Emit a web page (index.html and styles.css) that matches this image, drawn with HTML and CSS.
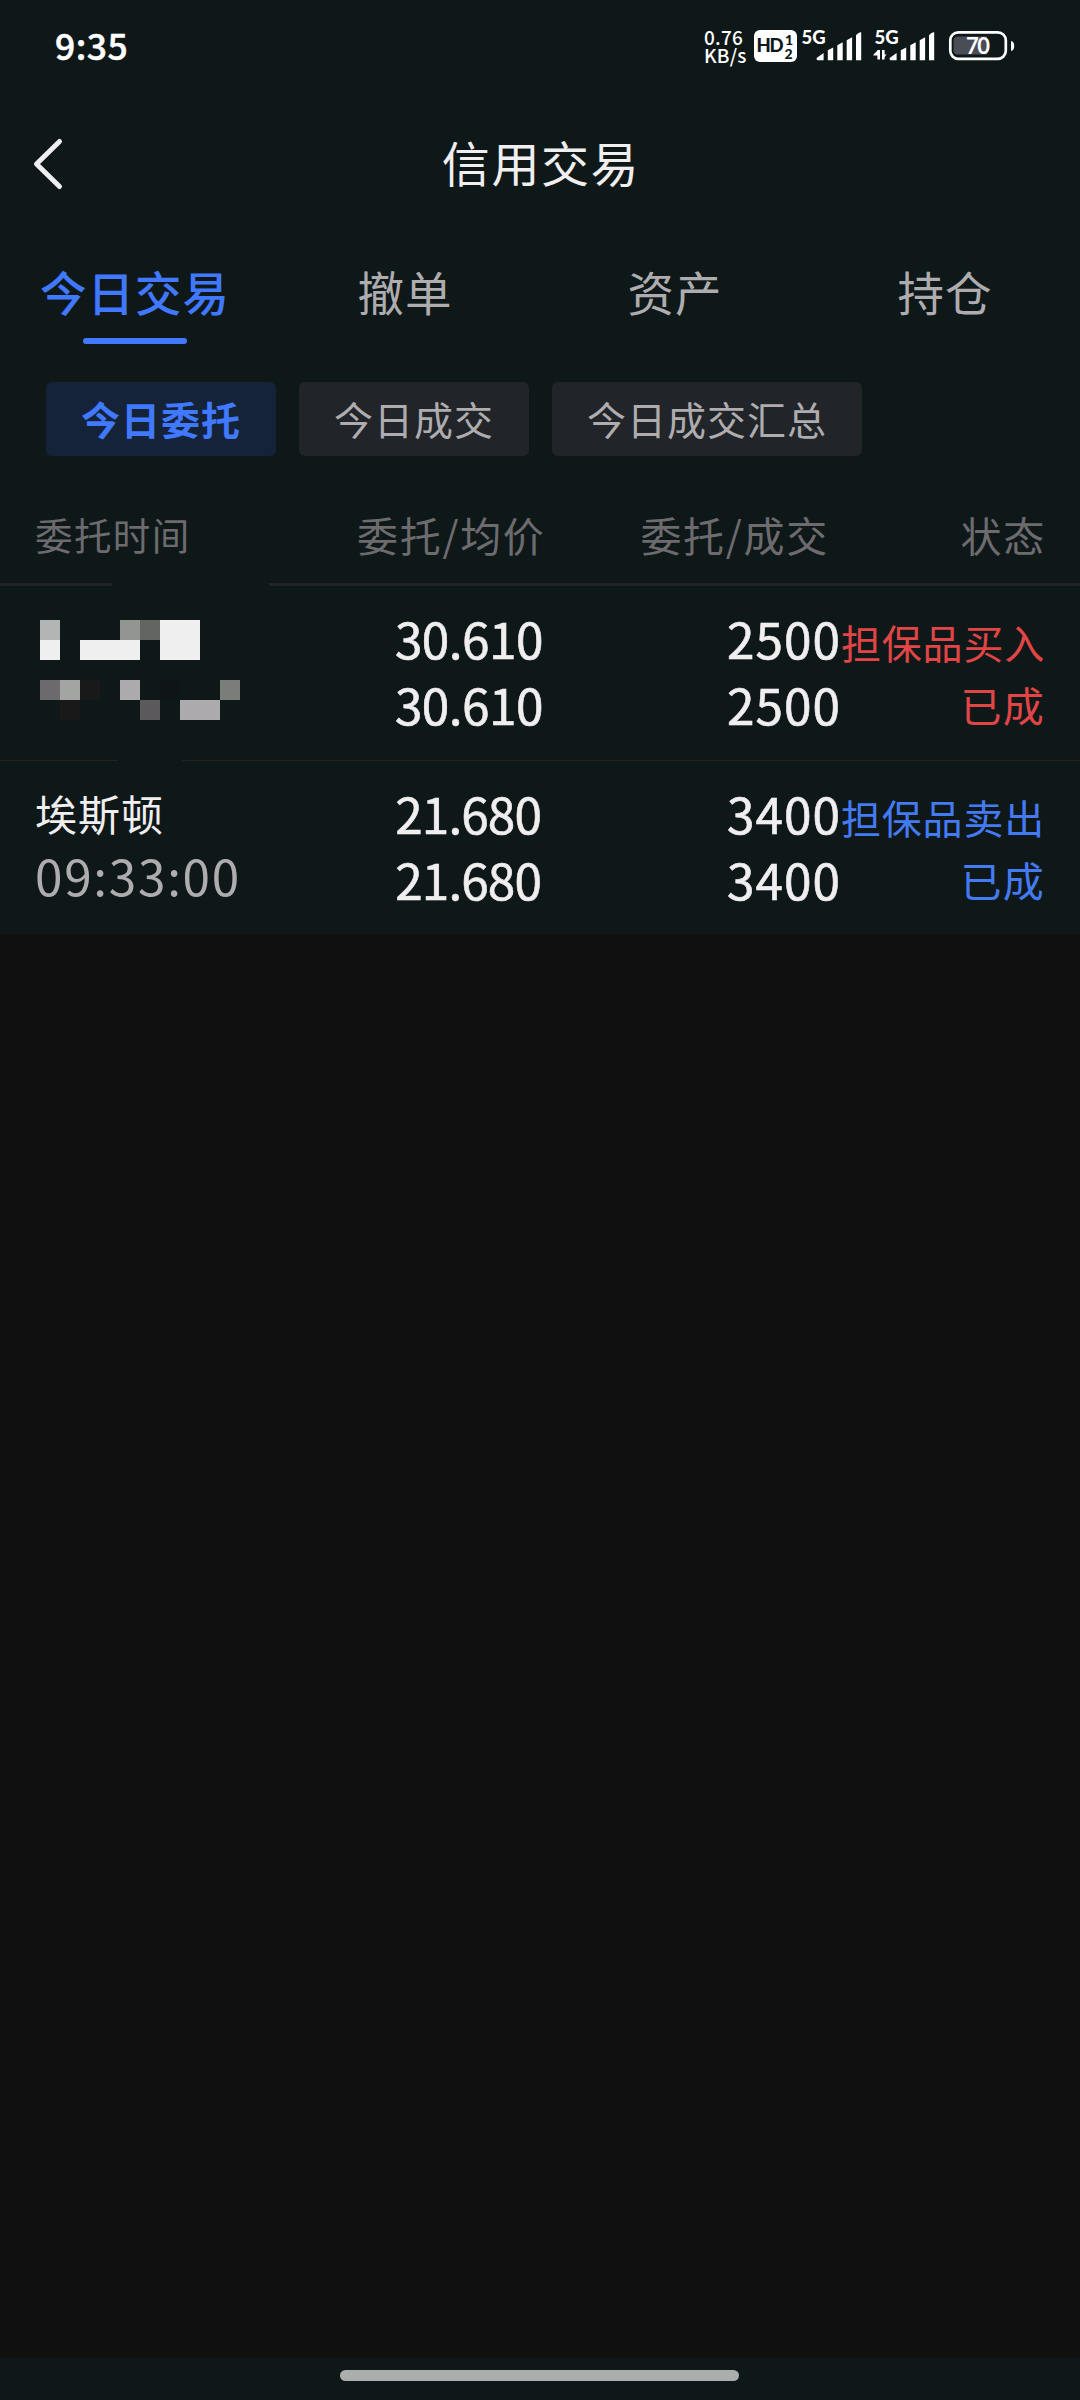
FILE: index.html
```html
<!DOCTYPE html>
<html lang="zh-CN">
<head>
<meta charset="utf-8">
<title>信用交易</title>
<link rel="stylesheet" href="styles.css">
</head>
<body>
<div class="statusbar">
  <span class="clock">9:35</span>
  <div class="indicators">
    <div class="speed"><span>0.76</span><span>KB/s</span></div>
    <svg class="status-icons" width="262" height="36" viewBox="753 28 262 36">
      <rect x="754" y="30" width="43" height="32" rx="6" fill="#fff"/>
      <g class="badge-text">
        <text x="756.5" y="52.4" font-size="18.5" textLength="27">HD</text>
        <text x="785" y="45" font-size="14">1</text>
        <text x="784.5" y="58.5" font-size="14">2</text>
      </g>
      <g class="net-text">
        <text x="801.5" y="44">5G</text>
        <text x="874.5" y="44">5G</text>
      </g>
      <g id="bars" fill="#fff">
        <path d="M823.6 53v7.3h-5.600q-1.400 0-1.400-1.600v-.7zM827.800 50.300l5.400-2.800v12.800h-5.400zM837.300 45.200l5.400-3v18.100h-5.400zM846.700 40.200l5.400-3v23.100h-5.400zM856 35.200q2-2.400 4.400-3h.8v28.100H856z"/>
      </g>
      <use href="#bars" x="73"/>
      <path d="M873.500 54.500l4.500-4.500v5.500h-4.500zM886.500 54.500l-4 5v-5z" fill="#fff"/>
      <path d="M878.700 50v9.500M883.300 50v9.500" stroke="#fff" stroke-width="2.600"/>
      <rect x="950.300" y="32.300" width="55.500" height="26.500" rx="8" fill="none" stroke="#fff" stroke-width="2.700"/>
      <path d="M987 36.500v18h-29q-4.500 0-4.500-4.500v-9q0-4.500 4.500-4.500z" fill="#4b4d56"/>
      <text class="battery-text" x="966" y="53.700" textLength="24">70</text>
      <path d="M1011 41q3.200.6 3.200 5t-3.200 5z" fill="#fff"/>
    </svg>
  </div>
</div>

<header class="titlebar">
  <svg class="back" width="36" height="56" viewBox="0 0 36 56"><path d="M28.500 5.500L5.500 28l23 22.500" fill="none" stroke="#f0eeef" stroke-width="5" stroke-linecap="round" stroke-linejoin="round"/></svg>
  <h1>信用交易</h1>
</header>

<nav class="tabs">
  <a class="tab active">今日交易</a>
  <a class="tab">撤单</a>
  <a class="tab">资产</a>
  <a class="tab">持仓</a>
</nav>

<div class="chips">
  <span class="chip active">今日委托</span>
  <span class="chip">今日成交</span>
  <span class="chip">今日成交汇总</span>
</div>

<div class="thead">
  <span class="small">委托时间</span>
  <span class="price">委托/均价</span>
  <span class="amount">委托/成交</span>
  <span class="state">状态</span>
</div>
<div class="rule"><i class="rule-left"></i><i class="rule-right"></i></div>

<main class="orders">
  <section class="order buy">
    <div class="who">
      <svg class="mosaic" width="200" height="100" viewBox="0 0 200 100" shape-rendering="crispEdges">
        <path d="M0 0h20v20H0z" fill="#b3b5b4"/>
        <path d="M80 0h20v20H80z" fill="#929592"/>
        <path d="M100 0h20v20h-20z" fill="#626562"/>
        <path d="M0 20h20v20H0zM40 20h60v20H40zM120 0h40v40h-40z" fill="#efefef"/>
        <path d="M0 60h20v20H0z" fill="#6c6a6d"/>
        <path d="M20 60h20v20H20z" fill="#a2a5a2"/>
        <path d="M40 60h20v20H40zM20 80h20v20H20z" fill="#191919"/>
        <path d="M80 60h20v20H80zM140 80h40v20h-40z" fill="#acaaad"/>
        <path d="M120 60h20v20h-20z" fill="#0f1417"/>
        <path d="M180 60h20v20h-20z" fill="#7a7d7a"/>
        <path d="M100 80h20v20h-20z" fill="#5b595c"/>
      </svg>
    </div>
    <div class="nums price"><span>30.610</span><span>30.610</span></div>
    <div class="nums amount"><span>2500</span><span>2500</span></div>
    <div class="status"><span class="kind">担保品买入</span><span class="done">已成</span></div>
  </section>
  <div class="divider"><i class="divider-left"></i><i class="divider-right"></i></div>
  <section class="order sell">
    <div class="who"><span class="name">埃斯顿</span><span class="time">09:33:00</span></div>
    <div class="nums price"><span>21.680</span><span>21.680</span></div>
    <div class="nums amount"><span>3400</span><span>3400</span></div>
    <div class="status"><span class="kind">担保品卖出</span><span class="done">已成</span></div>
  </section>
</main>
<div class="blank"></div>
<footer class="navbar"><i></i></footer>
</body>
</html>
```
FILE: styles.css
```css
* { box-sizing: border-box; }
body {
  margin: 0;
  width: 1080px;
  height: 2400px;
  display: flex;
  flex-direction: column;
  background: #0f1819;
  color: #f0eeef;
  font-family: "Noto Sans CJK SC", sans-serif;
  overflow: hidden;
}
span, a, h1 { white-space: nowrap; }

.statusbar {
  height: 94px;
  padding: 26px 65px 0 55px;
  display: flex;
  justify-content: space-between;
  color: #fff;
}
.clock { font-size: 35.500px; line-height: 38px; font-weight: 500; letter-spacing: 0.500px; -webkit-text-stroke: 0.500px; }
.indicators { display: flex; gap: 8px; }
.speed { width: 41px; display: flex; flex-direction: column; font-size: 19px; line-height: 18px; font-weight: 500; padding-top: 2px; letter-spacing: 0.200px; }
.status-icons { margin-top: 2px; overflow: visible; }
.status-icons text { font-family: Lato, sans-serif; font-weight: 900; }
.badge-text { fill: #0f1819; }
.net-text { fill: #fff; font-size: 18.500px; }
.status-icons .battery-text { fill: #fff; font-size: 22px; font-weight: 700; }

.titlebar { height: 140px; display: flex; padding: 42px 31px 0; }
.back { flex: none; }
h1 {
  flex: 1;
  margin: -10px 34px 0 0;
  text-align: center;
  font-size: 48px;
  line-height: 70px;
  font-weight: 400;
  letter-spacing: 1.600px;
}

.tabs { height: 111px; display: grid; grid-template-columns: repeat(4, 1fr); }
.tab {
  display: flex;
  flex-direction: column;
  align-items: center;
  padding-top: 22px;
  font-size: 46.500px;
  line-height: 70px;
  letter-spacing: 1px;
  color: #aeacaf;
}
.tab.active { color: #4079ff; font-weight: 500; }
.tab.active::after { content: ""; width: 104px; height: 6px; margin-top: 12px; border-radius: 3px; background: #4079ff; }

.chips { display: flex; gap: 23px; padding: 37px 46px 0; height: 118px; }
.chip {
  height: 74px;
  padding: 0 35px;
  border-radius: 6px;
  background: #212428;
  color: #aeacaf;
  font-size: 39px;
  line-height: 72px;
  letter-spacing: 1px;
}
.chip.active { background: #152339; color: #4079ff; font-weight: 700; }

.thead {
  height: 120px;
  padding: 41px 34px 0 35px;
  display: grid;
  grid-template-columns: 322px 221px 251px 1fr;
  line-height: 60px;
  font-size: 41px;
  letter-spacing: 1.700px;
  color: #6d6b6e;
}
.thead .small { font-size: 37.500px; letter-spacing: 1.400px; }
.thead .amount { text-align: right; }
.thead .state { text-align: right; }

.rule, .divider { display: flex; justify-content: space-between; }
.rule { height: 3px; }
.rule-left { width: 112px; background: #212428; }
.rule-right { width: 811px; background: #212428; }
.divider { height: 1px; }
.divider-left { width: 118px; background: #23221f; }
.divider-right { width: 898px; background: #23221f; }

.order { display: grid; grid-template-columns: 320px 224px 297px 204px; padding-top: 21px; height: 174px; }
.order.sell { height: 173px; }
.who { display: flex; flex-direction: column; padding-left: 35px; }
.mosaic { margin: 13px 0 0 5px; }
.name { font-size: 42px; line-height: 62px; letter-spacing: 1px; }
.time { margin-top: -2px; font-size: 49.500px; line-height: 66px; letter-spacing: 1.700px; color: #aeacaf; }
.nums {
  display: flex;
  flex-direction: column;
  align-items: flex-end;
  margin-top: -2px;
  font-size: 49.500px;
  line-height: 66px;
  -webkit-text-stroke: 0.600px;
}
.nums.price { letter-spacing: -0.500px; padding-right: 1px; }
.sell .price { padding-right: 3px; letter-spacing: -0.900px; }
.nums.amount { letter-spacing: 1px; }
.status { display: flex; flex-direction: column; align-items: flex-end; margin-top: 4px; line-height: 62px; }
.kind { font-size: 40px; letter-spacing: 0.800px; }
.done { font-size: 41px; letter-spacing: 1.200px; }
.buy .status { color: #e24546; }
.sell .status { color: #447bf4; }

.blank { flex: 1; background: #101010; }
.navbar { height: 42px; padding-top: 12px; display: flex; justify-content: center; }
.navbar i { width: 399px; height: 11px; margin-right: 1px; border-radius: 6px; background: #acaead; }
```
